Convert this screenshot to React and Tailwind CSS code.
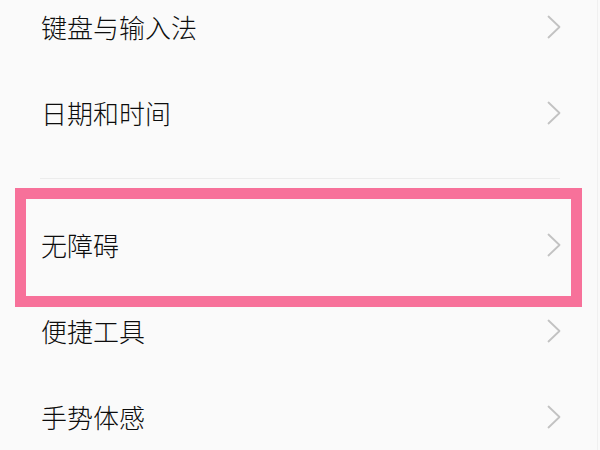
import React from "react";

const groups = [["键盘与输入法", "日期和时间"], ["无障碍", "便捷工具", "手势体感"]];

function Chevron() {
    return (
        <svg width="14" height="24" viewBox="0 0 14 24" fill="none">
            <polyline
                points="1.5,1.5 12.5,12 1.5,22.5"
                stroke="#c2c2c2"
                strokeWidth="1.8"
                strokeLinecap="round"
                strokeLinejoin="round"
            />
        </svg>
    );
}

function Row({ label }) {
    return (
        <div className="flex h-[86px] items-center justify-between pl-[41px] pr-[39px]">
            <span className="text-[26px] font-light leading-none text-[#0d0d0d]">{label}</span>
            <Chevron />
        </div>
    );
}

export default function App() {
    return (
        <div
            className="relative h-[450px] w-[600px] overflow-hidden bg-[#fafafa]"
            style={{ fontFamily: '"Noto Sans CJK SC", "Noto Sans", sans-serif' }}
        >
            <div className="-mt-[16px] flex flex-col">
                {groups[0].map((label) => (
                    <Row key={label} label={label} />
                ))}
                <div className="pb-[23px] pt-[22px] pl-[40px] pr-[40px]">
                    <div className="h-px bg-[#ececec]" />
                </div>
                {groups[1].map((label) => (
                    <Row key={label} label={label} />
                ))}
            </div>
            {/* highlight frame over 无障碍 */}
            <div className="absolute left-[15px] top-[188px] h-[119px] w-[567px] border-[11px] border-[#f7719a]" />
            <div className="absolute right-[2px] top-0 h-full w-px bg-[#f0f0f0]" />
        </div>
    );
}
